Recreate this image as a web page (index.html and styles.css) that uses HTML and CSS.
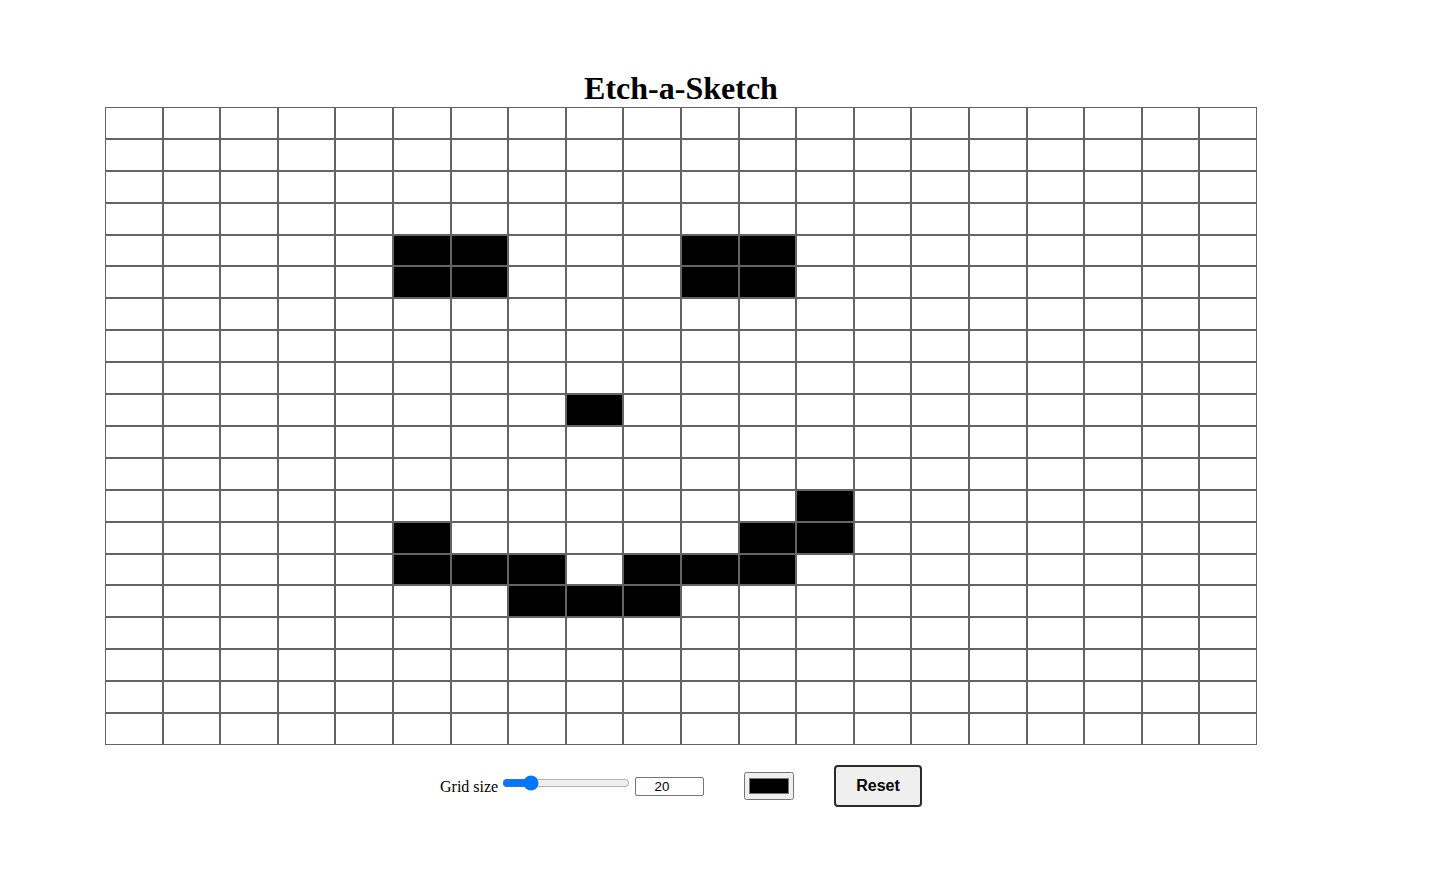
FILE: index.html
```html
<!DOCTYPE html>
<html lang="en">
<head>
<meta charset="utf-8">
<title>Etch-a-Sketch</title>
<link rel="stylesheet" href="styles.css">
</head>
<body>
<main class="app">
  <h1 class="title">Etch-a-Sketch</h1>
  <div class="board" id="board"></div>
  <div class="controls">
    <label class="size-label" for="size">Grid size</label>
    <input class="size-range" id="size" type="range" min="1" max="100" value="20">
    <input class="size-number" id="sizeNumber" type="number" min="1" max="100" value="20">
    <input class="pen-color" type="color" value="#000000">
    <button class="reset" type="button">Reset</button>
  </div>
</main>
<script src="script.js"></script>
</body>
</html>
```

FILE: styles.css
```css
* { box-sizing: border-box; }

body {
  margin: 0;
  background: #ffffff;
  font-family: "Liberation Serif", "Times New Roman", serif;
}

.app {
  width: 1362px;
  padding-top: 70px;
  display: flex;
  flex-direction: column;
  align-items: center;
}

.title {
  margin: 0;
  font-size: 32px;
  line-height: 37px;
  font-weight: bold;
  color: #000;
}

.board {
  width: 1152px;
  height: 638px;
  display: grid;
  grid-template-columns: repeat(20, 1fr);
  grid-template-rows: repeat(20, 1fr);
}

.cell {
  border: 1px solid #646464;
  background: #ffffff;
}

.cell.filled {
  background: #000000;
}

.controls {
  margin-top: 20px;
  display: flex;
  align-items: center;
}

.size-label {
  font-size: 16px;
  width: 58px;
  margin-top: 2px;
  white-space: nowrap;
}

.size-range {
  margin: 0 0 6px 4px;
  width: 128px;
  accent-color: #0075ff;
}

.size-number {
  margin: 0 0 0 5px;
  width: 69px;
  height: 19px;
  padding: 0 17px 0 2px;
  border: 1px solid #767676;
  border-radius: 2px;
  font-family: "Liberation Sans", Arial, sans-serif;
  font-size: 13.33px;
  text-align: center;
  -moz-appearance: textfield;
}

.size-number::-webkit-outer-spin-button,
.size-number::-webkit-inner-spin-button {
  -webkit-appearance: none;
  margin: 0;
}

.pen-color {
  margin: 0 0 0 40px;
  width: 50px;
  height: 28px;
}

.reset {
  margin: 0 0 0 40px;
  width: 88px;
  height: 42px;
  border: 2px solid #2b2b2b;
  border-radius: 4px;
  background: #efefef;
  font-family: "Liberation Sans", Arial, sans-serif;
  font-size: 16px;
  font-weight: bold;
  color: #000;
  cursor: pointer;
}
```

FILE: script.js
```js
(function () {
  var board = document.getElementById('board');
  var size = 20;
  var filled = {
    4: [5, 6, 10, 11],
    5: [5, 6, 10, 11],
    9: [8],
    12: [12],
    13: [5, 11, 12],
    14: [5, 6, 7, 9, 10, 11],
    15: [7, 8, 9]
  };
  for (var r = 0; r < size; r++) {
    for (var c = 0; c < size; c++) {
      var cell = document.createElement('div');
      cell.className = 'cell';
      if (filled[r] && filled[r].indexOf(c) !== -1) {
        cell.classList.add('filled');
      }
      cell.addEventListener('mouseover', function (e) {
        e.target.classList.add('filled');
      });
      board.appendChild(cell);
    }
  }
  document.querySelector('.reset').addEventListener('click', function () {
    board.querySelectorAll('.cell').forEach(function (el) { el.classList.remove('filled'); });
  });
})();
```
